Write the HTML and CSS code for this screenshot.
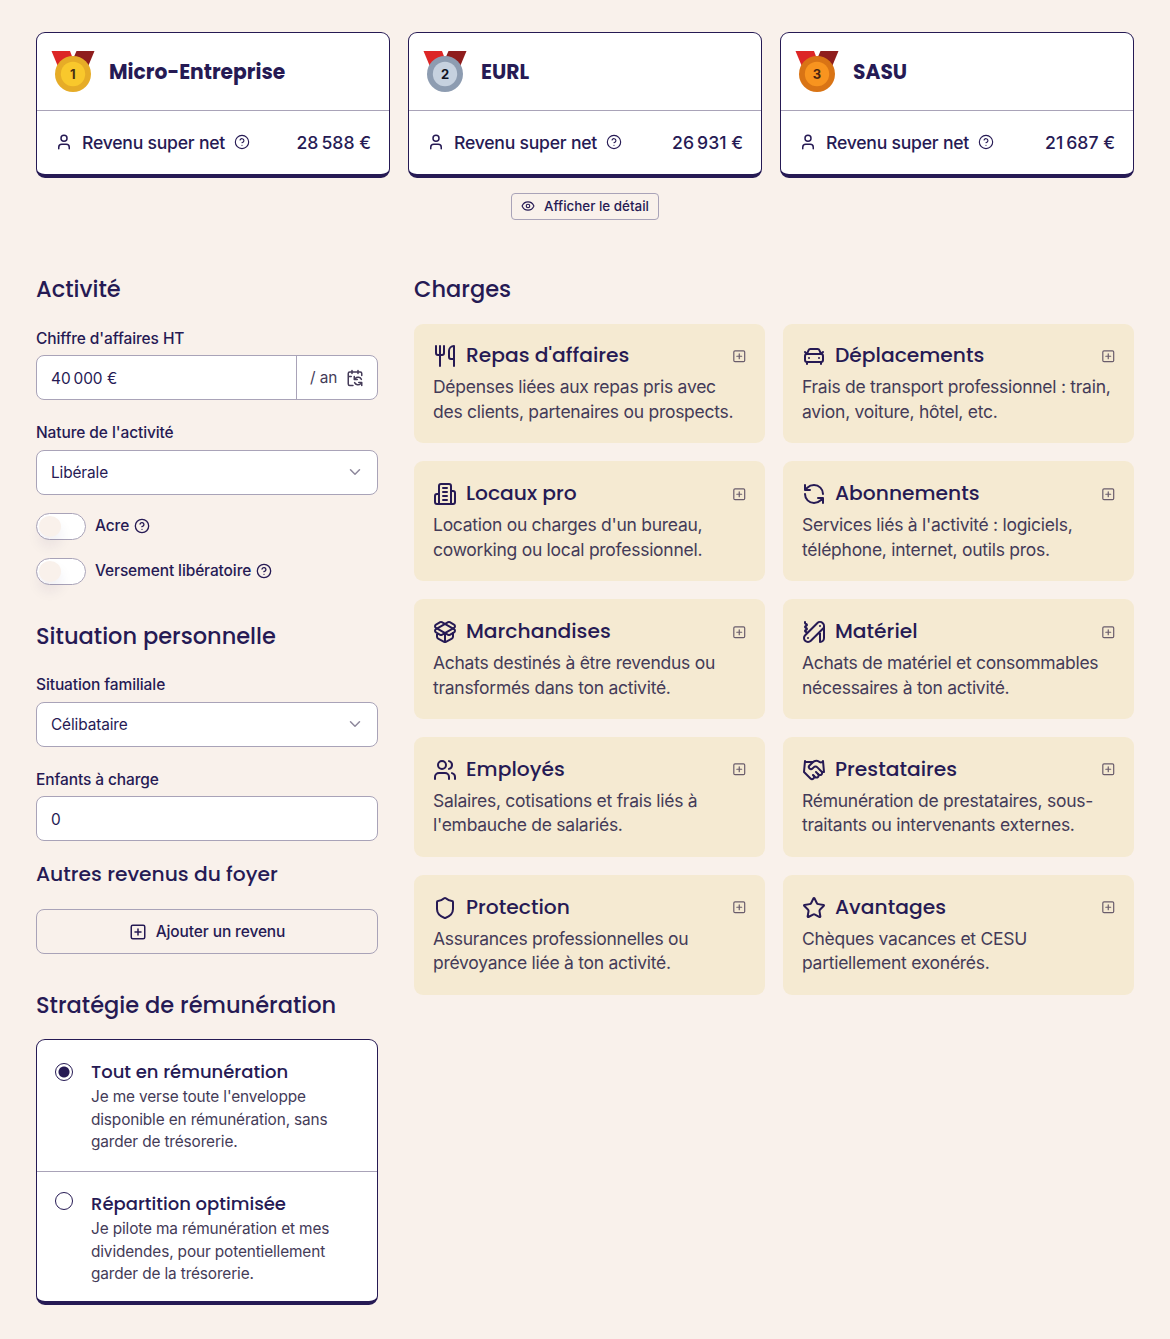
FILE: index.html
```html
<!DOCTYPE html>
<html lang="fr">
<head>
<meta charset="utf-8">
<title>Simulateur de revenus</title>
<link rel="stylesheet" href="styles.css">
</head>
<body>
<svg class="sprite" aria-hidden="true">
  <symbol id="user" viewBox="0 0 24 24"><path d="M19 21v-2a4 4 0 0 0-4-4H9a4 4 0 0 0-4 4v2"/><circle cx="12" cy="7" r="4"/></symbol>
  <symbol id="help" viewBox="0 0 24 24"><circle cx="12" cy="12" r="10"/><path d="M9.09 9a3 3 0 0 1 5.83 1c0 2-3 3-3 3M12 17h.01"/></symbol>
  <symbol id="eye" viewBox="0 0 24 24"><path d="M2.06 12.35a1 1 0 0 1 0-.7 10.75 10.75 0 0 1 19.88 0 1 1 0 0 1 0 .7 10.75 10.75 0 0 1-19.88 0"/><circle cx="12" cy="12" r="3"/></symbol>
  <symbol id="plus" viewBox="0 0 24 24"><rect x="3" y="3" width="18" height="18" rx="2"/><path d="M8 12h8M12 8v8"/></symbol>
  <symbol id="chevron" viewBox="0 0 24 24"><path d="m6 9 6 6 6-6"/></symbol>
  <symbol id="calendar" viewBox="0 0 24 24"><path d="M11 10v4h4M11 14l1.535-1.605a5 5 0 0 1 8 1.5M16 2v4M21 18l-1.535 1.605a5 5 0 0 1-8-1.5M21 22v-4h-4M21 8.5V6a2 2 0 0 0-2-2H5a2 2 0 0 0-2 2v14a2 2 0 0 0 2 2h4.3M3 10h4M8 2v4"/></symbol>
  <symbol id="utensils" viewBox="0 0 24 24"><path d="M3 2v7c0 1.1.9 2 2 2h4a2 2 0 0 0 2-2V2M7 2v20M21 15V2a5 5 0 0 0-5 5v6c0 1.1.9 2 2 2h3Zm0 0v7"/></symbol>
  <symbol id="car" viewBox="0 0 24 24"><path d="m21 8-2 2-1.5-3.7A2 2 0 0 0 15.646 5H8.4a2 2 0 0 0-1.903 1.257L5 10 3 8M7 14h.01M17 14h.01M5 18v2M19 18v2"/><rect x="3" y="10" width="18" height="8" rx="2"/></symbol>
  <symbol id="building" viewBox="0 0 24 24"><path d="M6 22V4a2 2 0 0 1 2-2h8a2 2 0 0 1 2 2v18ZM6 12H4a2 2 0 0 0-2 2v6a2 2 0 0 0 2 2h2M18 9h2a2 2 0 0 1 2 2v9a2 2 0 0 1-2 2h-2M10 6h4M10 10h4M10 14h4M10 18h4"/></symbol>
  <symbol id="refresh" viewBox="0 0 24 24"><path d="M21 12a9 9 0 0 0-9-9 9.75 9.75 0 0 0-6.74 2.74L3 8M3 3v5h5M3 12a9 9 0 0 0 9 9 9.75 9.75 0 0 0 6.74-2.74L21 16M16 16h5v5"/></symbol>
  <symbol id="package" viewBox="0 0 24 24"><path d="M12 22v-9M15.17 2.21a1.67 1.67 0 0 1 1.63 0L21 4.57a1.93 1.93 0 0 1 0 3.36L8.82 14.79a1.655 1.655 0 0 1-1.64 0L3 12.43a1.93 1.93 0 0 1 0-3.36zM20 13v3.87a2.06 2.06 0 0 1-1.11 1.83l-6 3.08a1.93 1.93 0 0 1-1.78 0l-6-3.08A2.06 2.06 0 0 1 4 16.87V13"/><path d="M21 12.43a1.93 1.93 0 0 0 0-3.36L8.83 2.2a1.64 1.64 0 0 0-1.63 0L3 4.57a1.93 1.93 0 0 0 0 3.36l12.18 6.86a1.636 1.636 0 0 0 1.63 0z"/></symbol>
  <symbol id="knife" viewBox="0 0 24 24"><path d="M3 2v1c0 1 2 1 2 2S3 6 3 7s2 1 2 2-2 1-2 2 2 1 2 2M18 6h.01M6 18h.01M20.83 8.83a4 4 0 0 0-5.66-5.66l-12 12a4 4 0 1 0 5.66 5.66ZM18 11.66V22a4 4 0 0 0 4-4V6"/></symbol>
  <symbol id="users" viewBox="0 0 24 24"><path d="M16 21v-2a4 4 0 0 0-4-4H6a4 4 0 0 0-4 4v2M22 21v-2a4 4 0 0 0-3-3.87M16 3.13a4 4 0 0 1 0 7.75"/><circle cx="9" cy="7" r="4"/></symbol>
  <symbol id="handshake" viewBox="0 0 24 24"><path d="m11 17 2 2a1 1 0 1 0 3-3"/><path d="m14 14 2.5 2.5a1 1 0 1 0 3-3l-3.88-3.88a3 3 0 0 0-4.24 0l-.88.88a1 1 0 1 1-3-3l2.81-2.81a5.79 5.79 0 0 1 7.06-.87l.47.28a2 2 0 0 0 1.42.25L21 4M21 3l1 11h-2M3 3 2 14l6.5 6.5a1 1 0 1 0 3-3M3 4h8"/></symbol>
  <symbol id="shield" viewBox="0 0 24 24"><path d="M20 13c0 5-3.5 7.5-7.66 8.95a1 1 0 0 1-.67-.01C7.5 20.5 4 18 4 13V6a1 1 0 0 1 1-1c2 0 4.5-1.2 6.24-2.72a1.17 1.17 0 0 1 1.52 0C14.51 3.81 17 5 19 5a1 1 0 0 1 1 1z"/></symbol>
  <symbol id="star" viewBox="0 0 24 24"><path d="M11.525 2.295a.53.53 0 0 1 .95 0l2.31 4.679a2.123 2.123 0 0 0 1.595 1.16l5.166.756a.53.53 0 0 1 .294.904l-3.736 3.638a2.123 2.123 0 0 0-.611 1.878l.882 5.14a.53.53 0 0 1-.771.56l-4.618-2.428a2.122 2.122 0 0 0-1.973 0L6.396 21.01a.53.53 0 0 1-.77-.56l.881-5.139a2.122 2.122 0 0 0-.611-1.879L2.16 9.795a.53.53 0 0 1 .294-.906l5.165-.755a2.122 2.122 0 0 0 1.597-1.16z"/></symbol>
  <symbol id="ribbon" viewBox="0 0 44 42"><path class="ribbon-left" d="M.5 0H19l3 8-14 10z"/><path class="ribbon-right" d="M25.5 0h18L36 18 22 8z"/></symbol>
</svg>

<main class="page">
  <section class="results">
    <article class="result">
      <header class="result-head">
        <svg class="medal gold" viewBox="0 0 44 42"><use href="#ribbon"/><circle class="rim" cx="22" cy="23" r="18"/><circle class="face" cx="22" cy="23" r="12.2"/><text x="21.7" y="27.7">1</text></svg>
        <h2 class="result-name">Micro-Entreprise</h2>
      </header>
      <div class="result-row"><svg class="icon i18"><use href="#user"/></svg><span class="result-label">Revenu super net</span><svg class="icon i16 thin"><use href="#help"/></svg><span class="amount">28&#8239;588 €</span></div>
    </article>
    <article class="result">
      <header class="result-head">
        <svg class="medal silver" viewBox="0 0 44 42"><use href="#ribbon"/><circle class="rim" cx="22" cy="23" r="18"/><circle class="face" cx="22" cy="23" r="12.2"/><text x="22" y="27.7">2</text></svg>
        <h2 class="result-name">EURL</h2>
      </header>
      <div class="result-row"><svg class="icon i18"><use href="#user"/></svg><span class="result-label">Revenu super net</span><svg class="icon i16 thin"><use href="#help"/></svg><span class="amount">26&#8239;931 €</span></div>
    </article>
    <article class="result">
      <header class="result-head">
        <svg class="medal bronze" viewBox="0 0 44 42"><use href="#ribbon"/><circle class="rim" cx="22" cy="23" r="18"/><circle class="face" cx="22" cy="23" r="12.2"/><text x="22" y="27.7">3</text></svg>
        <h2 class="result-name">SASU</h2>
      </header>
      <div class="result-row"><svg class="icon i18"><use href="#user"/></svg><span class="result-label">Revenu super net</span><svg class="icon i16 thin"><use href="#help"/></svg><span class="amount">21&#8239;687 €</span></div>
    </article>
  </section>

  <button class="detail-btn"><svg class="icon i14"><use href="#eye"/></svg>Afficher le détail</button>

  <div class="columns">
    <form class="settings">
      <h2 class="title">Activité</h2>
      <div class="field first">
        <span class="label">Chiffre d'affaires HT</span>
        <div class="control split"><span class="value">40&#8239;000 €</span><span class="unit"><span>/ an</span><svg class="icon i18"><use href="#calendar"/></svg></span></div>
      </div>
      <div class="field">
        <span class="label tall">Nature de l'activité</span>
        <div class="control select"><span>Libérale</span><svg class="icon i18 chevron"><use href="#chevron"/></svg></div>
      </div>
      <div class="switch-row"><span class="switch"></span><span class="switch-label">Acre</span><svg class="icon i16"><use href="#help"/></svg></div>
      <div class="switch-row"><span class="switch"></span><span class="switch-label">Versement libératoire</span><svg class="icon i16"><use href="#help"/></svg></div>

      <h2 class="title section">Situation personnelle</h2>
      <div class="field second">
        <span class="label tall">Situation familiale</span>
        <div class="control select"><span>Célibataire</span><svg class="icon i18 chevron"><use href="#chevron"/></svg></div>
      </div>
      <div class="field">
        <span class="label">Enfants à charge</span>
        <div class="control"><span class="value">0</span></div>
      </div>
      <h3 class="subtitle">Autres revenus du foyer</h3>
      <button type="button" class="add-btn"><svg class="icon i18"><use href="#plus"/></svg>Ajouter un revenu</button>

      <h2 class="title section">Stratégie de rémunération</h2>
      <div class="options">
        <div class="option">
          <span class="radio checked"></span>
          <div><h4 class="option-title">Tout en rémunération</h4><p class="option-text">Je me verse toute l'enveloppe<br>disponible en rémunération, sans<br>garder de trésorerie.</p></div>
        </div>
        <div class="option">
          <span class="radio"></span>
          <div><h4 class="option-title">Répartition optimisée</h4><p class="option-text">Je pilote ma rémunération et mes<br>dividendes, pour potentiellement<br>garder de la trésorerie.</p></div>
        </div>
      </div>
    </form>

    <section class="charges">
      <h2 class="title">Charges</h2>
      <div class="grid">
        <article class="charge"><header class="charge-head"><svg class="icon i24"><use href="#utensils"/></svg><h3 class="charge-title">Repas d'affaires</h3><svg class="icon add"><use href="#plus"/></svg></header><p class="charge-text">Dépenses liées aux repas pris avec<br>des clients, partenaires ou prospects.</p></article>
        <article class="charge"><header class="charge-head"><svg class="icon i24"><use href="#car"/></svg><h3 class="charge-title">Déplacements</h3><svg class="icon add"><use href="#plus"/></svg></header><p class="charge-text">Frais de transport professionnel : train,<br>avion, voiture, hôtel, etc.</p></article>
        <article class="charge"><header class="charge-head"><svg class="icon i24"><use href="#building"/></svg><h3 class="charge-title">Locaux pro</h3><svg class="icon add"><use href="#plus"/></svg></header><p class="charge-text">Location ou charges d'un bureau,<br>coworking ou local professionnel.</p></article>
        <article class="charge"><header class="charge-head"><svg class="icon i24"><use href="#refresh"/></svg><h3 class="charge-title">Abonnements</h3><svg class="icon add"><use href="#plus"/></svg></header><p class="charge-text">Services liés à l'activité : logiciels,<br>téléphone, internet, outils pros.</p></article>
        <article class="charge"><header class="charge-head"><svg class="icon i24"><use href="#package"/></svg><h3 class="charge-title">Marchandises</h3><svg class="icon add"><use href="#plus"/></svg></header><p class="charge-text">Achats destinés à être revendus ou<br>transformés dans ton activité.</p></article>
        <article class="charge"><header class="charge-head"><svg class="icon i24"><use href="#knife"/></svg><h3 class="charge-title">Matériel</h3><svg class="icon add"><use href="#plus"/></svg></header><p class="charge-text">Achats de matériel et consommables<br>nécessaires à ton activité.</p></article>
        <article class="charge"><header class="charge-head"><svg class="icon i24"><use href="#users"/></svg><h3 class="charge-title">Employés</h3><svg class="icon add"><use href="#plus"/></svg></header><p class="charge-text">Salaires, cotisations et frais liés à<br>l'embauche de salariés.</p></article>
        <article class="charge"><header class="charge-head"><svg class="icon i24"><use href="#handshake"/></svg><h3 class="charge-title">Prestataires</h3><svg class="icon add"><use href="#plus"/></svg></header><p class="charge-text">Rémunération de prestataires, sous-<br>traitants ou intervenants externes.</p></article>
        <article class="charge"><header class="charge-head"><svg class="icon i24"><use href="#shield"/></svg><h3 class="charge-title">Protection</h3><svg class="icon add"><use href="#plus"/></svg></header><p class="charge-text">Assurances professionnelles ou<br>prévoyance liée à ton activité.</p></article>
        <article class="charge"><header class="charge-head"><svg class="icon i24"><use href="#star"/></svg><h3 class="charge-title">Avantages</h3><svg class="icon add"><use href="#plus"/></svg></header><p class="charge-text">Chèques vacances et CESU<br>partiellement exonérés.</p></article>
      </div>
    </section>
  </div>
</main>
</body>
</html>
```
FILE: styles.css
```css
:root {
  --ink: #261a54;
  --text: #443b58;
  --line: #a9a3b8;
  --cream: #f9f1eb;
  --sand: #f5ead2;
  --display: Poppins, Inter, sans-serif;
}
* { box-sizing: border-box; }
body { margin: 0; background: var(--cream); color: var(--ink); font-family: Inter, sans-serif; }
h2, h3, h4, p { margin: 0; }
button { font-family: inherit; color: inherit; background: transparent; }
.sprite { display: none; }
.page { padding: 32px 36px 0; height: 1339px; display: flex; flex-direction: column; }

.icon { flex: none; fill: none; stroke: currentColor; stroke-width: 2; stroke-linecap: round; stroke-linejoin: round; }
.i14 { width: 14px; height: 14px; }
.i16 { width: 16px; height: 16px; }
.i18 { width: 18px; height: 18px; }
.i24 { width: 24px; height: 24px; }
.thin { stroke-width: 1.7; }

.results { display: grid; grid-template-columns: repeat(3, 1fr); gap: 18px; }
.result { height: 146px; background: #fff; border: 1px solid var(--ink); border-bottom-width: 4px; border-radius: 9px; }
.result-head { height: 78px; padding: 0 14px; display: flex; align-items: center; gap: 14px; border-bottom: 1px solid var(--line); }
.medal { width: 44px; height: 42px; flex: none; }
.medal text { font: 700 13px Inter, sans-serif; text-anchor: middle; }
.ribbon-left { fill: #dc2626; }
.ribbon-right { fill: #8f1d1d; }
.gold .rim { fill: #e6ac27; }
.gold .face { fill: #f9c82c; }
.gold text { fill: #4a3012; }
.silver .rim { fill: #8d9cb1; }
.silver .face { fill: #c6d1df; }
.silver text { fill: #101322; }
.bronze .rim { fill: #d97415; }
.bronze .face { fill: #f8941f; }
.bronze text { fill: #4a2410; }
.result-name { font: 700 20.25px/30px var(--display); }
.result-row { height: 62px; padding: 0 18px; display: flex; align-items: center; font-size: 17.6px; font-weight: 500; letter-spacing: -0.23px; }
.result-label { margin: 1px 9px 0; }
.amount { margin: 1px 0 0 auto; }

.detail-btn { align-self: center; width: 148px; height: 27px; margin-top: 15px; padding: 0 0 1px; display: flex; align-items: center; justify-content: center; gap: 9px; border: 1px solid var(--line); border-radius: 4px; font-size: 13.4px; font-weight: 500; }

.columns { display: grid; grid-template-columns: 342px minmax(0, 1fr); gap: 36px; margin-top: 51px; }
.title { font: 500 22.5px/36px var(--display); }
.title.section { margin-top: 33px; }
.settings { display: flex; flex-direction: column; }
.field { margin-top: 22px; }
.field.first { margin-top: 21px; }
.field.second { margin-top: 20px; }
.label { display: block; margin-bottom: 5px; font-size: 15.5px; line-height: 22px; font-weight: 500; letter-spacing: -0.1px; }
.label.tall { margin-bottom: 6px; }
.control { height: 45px; padding: 0 14px; display: flex; align-items: center; justify-content: space-between; background: #fff; border: 1px solid var(--line); border-radius: 8px; font-size: 15.4px; letter-spacing: -0.12px; }
.value { padding-top: 2px; }
.split { padding-right: 0; }
.unit { width: 81px; height: 100%; padding: 0 13px; display: flex; align-items: center; justify-content: space-between; border-left: 1px solid var(--line); color: var(--text); }
.chevron { color: #8e889c; margin: 0 0 2px auto; }
.select { padding-right: 13px; }
.switch-row { margin-top: 18px; height: 27px; display: flex; align-items: center; gap: 5px; font-size: 15.5px; font-weight: 500; letter-spacing: -0.12px; }
.switch { width: 50px; height: 27px; margin-right: 4px; padding: 2px; background: #fff; border: 1px solid var(--line); border-radius: 14px; }
.switch::before { content: ""; display: block; width: 22px; height: 21px; border-radius: 50%; background: var(--cream); box-shadow: 0 9px 14px #261a5414; }
.switch-label { padding-bottom: 2px; }
.switch-row .icon { margin-bottom: 1px; }
.subtitle { margin-top: 18px; font: 500 20.25px/30px var(--display); }
.add-btn { height: 45px; margin-top: 20px; display: flex; align-items: center; justify-content: center; gap: 9px; border: 1px solid var(--line); border-radius: 8px; font-size: 15.5px; font-weight: 500; letter-spacing: -0.12px; }
.options { margin-top: 16px; height: 266px; background: #fff; border: 1px solid var(--ink); border-bottom-width: 4px; border-radius: 9px; }
.option { height: 131px; padding: 18px; display: flex; gap: 18px; }
.option + .option { border-top: 1px solid var(--line); height: 130px; }
.radio { flex: none; width: 18px; height: 18px; margin-top: 5px; border: 1px solid var(--ink); border-radius: 50%; background: #fff; }
.option + .option .radio { margin-top: 2px; }
.radio.checked { background: radial-gradient(circle, var(--ink) 5px, #fff 6px); }
.option-title { font: 500 18px/27px var(--display); }
.option-text { margin-top: 1px; font-size: 15.4px; line-height: 22.5px; letter-spacing: -0.14px; color: var(--text); white-space: nowrap; }

.grid { margin-top: 16.6px; display: grid; grid-template-columns: repeat(2, minmax(0, 1fr)); grid-auto-rows: 119.9px; gap: 18px; }
.charge { padding: 15.4px 19px; background: var(--sand); border-radius: 9px; }
.charge-head { display: flex; align-items: center; height: 33px; }
.charge-head .icon { margin-top: 1px; }
.charge-title { margin-left: 9px; font: 500 20.25px/30px var(--display); }
.charge-head .add { margin-left: auto; color: #6a5d6c; width: 14.5px; height: 14.5px; }
.charge-text { margin-top: 3px; font-size: 17.5px; line-height: 24.75px; letter-spacing: -0.27px; color: var(--text); white-space: nowrap; }
```
